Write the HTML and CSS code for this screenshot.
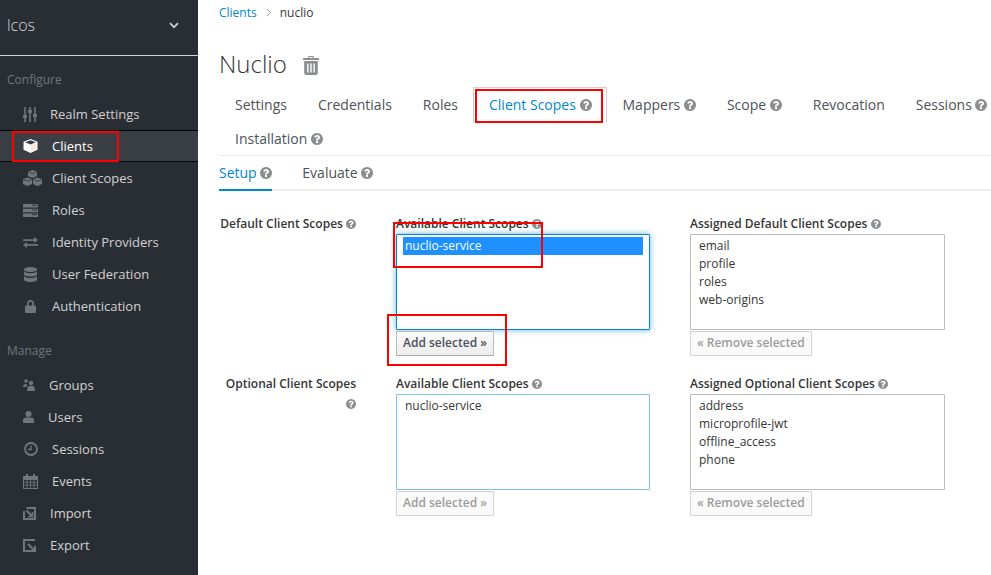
FILE: index.html
```html
<!DOCTYPE html>
<html lang="en">
<head>
<meta charset="utf-8">
<title>Nuclio</title>
<link rel="stylesheet" href="styles.css">
</head>
<body>
<svg class="defs" aria-hidden="true">
  <symbol id="q" viewBox="0 128 1536 1536"><path d="M896 1376v-192q0-14-9-23t-23-9h-192q-14 0-23 9t-9 23v192q0 14 9 23t23 9h192q14 0 23-9t9-23zm256-672q0-88-55.5-163t-138.5-116-170-41q-243 0-371 213-15 24 8 42l132 100q7 6 19 6 16 0 25-12 53-68 86-92 34-24 86-24 48 0 85.5 26t37.5 59q0 38-20 61t-68 45q-63 28-115.5 86.5t-52.5 125.5v36q0 14 9 23t23 9h192q14 0 23-9t9-23q0-19 21.5-49.5t54.5-49.5q32-18 49-28.5t46-35 44.5-48 28-60.5 12.5-81zm384 192q0 209-103 385.5t-279.5 279.5-385.5 103-385.5-103-279.5-279.5-103-385.5 103-385.5 279.5-279.5 385.5-103 385.5 103 279.5 279.5 103 385.5z"/></symbol>
</svg>
<div class="app">
  <aside class="sidebar">
    <div class="realm">
      <span>lcos</span>
      <svg class="chevron" width="10" height="7" viewBox="0 0 10 7"><path d="M1 1.2l4 4 4-4" fill="none" stroke="#d1d1d1" stroke-width="1.7"/></svg>
    </div>
    <div class="section first">Configure</div>
    <a class="item"><span class="slot s27"><svg width="14" height="15" viewBox="0 0 14 15"><path d="M2 0v15M7 0v15M12 0v15" stroke="#72767b" stroke-width="1.6" fill="none"/><path d="M0 8h4v3H0zM5 3h4v3H5zM10 7h4v3h-4z" fill="#72767b"/></svg></span>Realm Settings</a>
    <a class="item active"><span class="slot"><svg width="15" height="14" viewBox="0 0 15 14"><path d="M7.5 0L14.5 2.8v8L7.5 14 .5 10.8v-8z" fill="#fff"/><path d="M2.2 3.2l5.3 2.2 5.3-2.2-5.3-2z" fill="#393f44"/><path d="M8 6.2l5.500-2.200v6.200L8 12.600z" fill="#f6e8d8"/></svg></span>Clients</a>
    <a class="item"><span class="slot"><svg width="19" height="16" viewBox="0 0 19 16" fill="#72767b"><path d="M9.5 0l4.5 1.8v4.400L9.500 8 5 6.200V1.800z"/><path d="M4.500 7.500L9 9.300v4.600L4.500 16 0 14V9.300z"/><path d="M14.500 7.500L19 9.300V14l-4.500 2-4.500-2V9.300z"/><path d="M5.600 2.200l3.900 1.500 3.900-1.500M.6 9.600l3.900 1.600 3.900-1.600M10.600 9.600l3.900 1.600 3.900-1.600" stroke="#292e34" stroke-width=".7" fill="none"/></svg></span>Client Scopes</a>
    <a class="item"><span class="slot"><svg width="15" height="13" viewBox="0 0 15 13" fill="#72767b"><path d="M0 0h15v3.600H0zM0 4.700h15v3.600H0zM0 9.400h15V13H0z"/><path d="M9 1.200h5M9 5.900h5M9 10.600h5" stroke="#292e34" stroke-width=".9"/></svg></span>Roles</a>
    <a class="item"><span class="slot"><svg width="15" height="11" viewBox="0 0 15 11" fill="#72767b"><path d="M0 2.200h11V0l4 3-4 3V3.900H0zM15 7.100H4V5L0 8l4 3V8.800h11z"/></svg></span>Identity Providers</a>
    <a class="item"><span class="slot"><svg class="nudge1" width="13" height="15" viewBox="0 0 13 15" fill="#72767b"><path d="M0 2.500C0 1 3 0 6.500 0S13 1 13 2.500 10 5 6.500 5 0 4 0 2.500z"/><path d="M0 4.300C1 5.600 3.500 6.200 6.500 6.200S12 5.600 13 4.300v3C13 8.600 10 9.600 6.500 9.600S0 8.600 0 7.300z"/><path d="M0 9C1 10.300 3.500 10.900 6.500 10.900S12 10.300 13 9v3.500C13 14 10 15 6.500 15S0 14 0 12.500z"/></svg></span>User Federation</a>
    <a class="item"><span class="slot"><svg class="nudge2" width="11" height="13" viewBox="0 0 11 13" fill="#72767b"><path d="M1 5.500h1V3.500a3.500 3.500 0 0 1 7 0v2h1q1 0 1 1V12q0 1-1 1H1q-1 0-1-1V6.500q0-1 1-1zm2.700 0h3.600V3.500a1.800 1.800 0 0 0-3.600 0z"/></svg></span>Authentication</a>
    <div class="section">Manage</div>
    <a class="item"><span class="slot s26"><svg width="12" height="12" viewBox="0 0 12 12" fill="#72767b"><circle cx="3" cy="2" r="1.800"/><circle cx="8" cy="4" r="2.200"/><path d="M0 8q0-3 3-3 1 0 1.500.4Q3.400 6.500 3.400 8zM4.200 12V9.500q0-2.700 3.800-2.700t3.800 2.700V12z"/></svg></span>Groups</a>
    <a class="item"><span class="slot s25"><svg width="11" height="12" viewBox="0 0 11 12" fill="#72767b"><circle cx="5.500" cy="3" r="3"/><path d="M0 12V9.500Q0 6.500 3 6.500h5q3 0 3 3V12z"/></svg></span>Users</a>
    <a class="item"><span class="slot"><svg class="nudge1" width="14" height="14" viewBox="0 0 14 14"><circle cx="7" cy="7" r="6" fill="none" stroke="#72767b" stroke-width="1.800"/><path d="M7 3.500V7.500H4" fill="none" stroke="#72767b" stroke-width="1.400"/></svg></span>Sessions</a>
    <a class="item"><span class="slot"><svg width="15" height="15" viewBox="0 0 15 15" fill="#72767b"><path d="M0 2h3V0h2v2h5V0h2v2h3v13H0zM1 6v8h13V6z"/><path d="M1 8.300h13M1 11h13M4 6v8M7.500 6v8M11 6v8" stroke="#72767b" stroke-width=".8"/></svg></span>Events</a>
    <a class="item"><span class="slot s27"><svg width="13" height="13" viewBox="0 0 13 13" fill="none" stroke="#72767b"><path d="M3.500 1H12v11H1V4" stroke-width="2"/><path d="M3.500 3.500L9 9" stroke-width="2"/><path d="M5 9.500h4.500V5" stroke-width="1.600"/></svg></span>Import</a>
    <a class="item"><span class="slot s27"><svg width="13" height="13" viewBox="0 0 13 13" fill="none" stroke="#72767b"><path d="M9.500 12H1V1h11" stroke-width="2"/><path d="M5 5l6 6" stroke-width="2"/><path d="M12 7v5H7" stroke-width="2"/></svg></span>Export</a>
  </aside>
  <main class="main">
    <nav class="crumbs"><a>Clients</a><svg class="sep" width="23" height="9" viewBox="0 0 23 9"><path d="M10 1l3.500 3.500L10 8" fill="none" stroke="#9c9c9c"/></svg><span>nuclio</span></nav>
    <div class="title">
      <h1>Nuclio</h1>
      <svg width="16" height="19" viewBox="0 0 16 19" fill="#8b8d8f"><path d="M5.500 0h5L11 2h4.500q.5 0 .5.500V4H0V2.500Q0 2 .5 2H5zM6.300 1l-.2 1h3.800l-.2-1z"/><path d="M1.200 5h13.600v12q0 2-2 2H3.200q-2 0-2-2zM4.200 7.500v9h1.400v-9zm3.100 0v9h1.400v-9zm3.100 0v9h1.400v-9z" fill-rule="evenodd"/></svg>
    </div>
    <ul class="tabs">
      <li><a>Settings</a></li>
      <li><a>Credentials</a></li>
      <li><a>Roles</a></li>
      <li class="on"><a>Client Scopes <svg class="q"><use href="#q"/></svg></a></li>
      <li><a>Mappers <svg class="q"><use href="#q"/></svg></a></li>
      <li><a>Scope <svg class="q"><use href="#q"/></svg></a></li>
      <li><a>Revocation</a></li>
      <li><a>Sessions <svg class="q"><use href="#q"/></svg></a></li>
      <li><a>Installation <svg class="q"><use href="#q"/></svg></a></li>
    </ul>
    <ul class="subtabs">
      <li class="on"><a>Setup <svg class="q"><use href="#q"/></svg></a></li>
      <li><a>Evaluate <svg class="q"><use href="#q"/></svg></a></li>
    </ul>
    <form class="scopes">
      <div class="row-label">Default Client Scopes <svg class="qs"><use href="#q"/></svg></div>
      <div class="col">
        <div class="head">Available Client Scopes <svg class="qs"><use href="#q"/></svg></div>
        <div class="list focus"><div class="opt sel">nuclio-service</div></div>
        <button type="button" class="btn">Add selected »</button>
      </div>
      <div class="col">
        <div class="head">Assigned Default Client Scopes <svg class="qs"><use href="#q"/></svg></div>
        <div class="list"><div class="opt">email</div><div class="opt">profile</div><div class="opt">roles</div><div class="opt">web-origins</div></div>
        <button type="button" class="btn off">« Remove selected</button>
      </div>
      <div class="row-label wrap">Optional Client Scopes <svg class="qs"><use href="#q"/></svg></div>
      <div class="col">
        <div class="head">Available Client Scopes <svg class="qs"><use href="#q"/></svg></div>
        <div class="list light"><div class="opt">nuclio-service</div></div>
        <button type="button" class="btn off">Add selected »</button>
      </div>
      <div class="col">
        <div class="head">Assigned Optional Client Scopes <svg class="qs"><use href="#q"/></svg></div>
        <div class="list"><div class="opt">address</div><div class="opt">microprofile-jwt</div><div class="opt">offline_access</div><div class="opt">phone</div></div>
        <button type="button" class="btn off">« Remove selected</button>
      </div>
    </form>
  </main>
</div>
<div class="mark m-clients"></div>
<div class="mark m-tab"></div>
<div class="mark m-avail"></div>
<div class="mark m-add"></div>
</body>
</html>
```
FILE: styles.css
```css
* { box-sizing: border-box; }
html, body { margin: 0; height: 100%; overflow: hidden; }
body { font-family: "Open Sans", "Noto Sans", sans-serif; font-size: 12px; color: #363636; background: #fff; }
.defs { display: none; }
.app { display: flex; height: 575px; }

.sidebar { width: 198px; flex: none; background: #292e34; color: #d1d1d1; font-size: 13px; }
.realm { height: 56px; padding: 0 19px 5px 7px; display: flex; align-items: center; justify-content: space-between; font-size: 16px; font-weight: 300; color: #d1d1d1; border-bottom: 1px solid #d1d1d1; }
.section { padding: 9px 7px 0; height: 47px; line-height: 40px; color: #72767b; font-size: 12px; }
.section.first { height: 42px; padding-top: 4px; }
.item { display: flex; align-items: center; height: 32px; padding-left: 23px; color: #d1d1d1; }
.item.active { background: #393f44; color: #fff; border-top: 1px solid #030303; border-bottom: 1px solid #030303; }
.slot { width: 29px; flex: none; display: flex; align-items: center; }
.s27 { width: 27px; }
.s26 { width: 26px; }
.s25 { width: 25px; }
.nudge1 { margin-left: 1px; }
.nudge2 { margin-left: 2px; }

.main { flex: 1; min-width: 0; padding-left: 21px; }
.crumbs { height: 24px; line-height: 25px; display: flex; align-items: center; color: #363636; }
.crumbs a { color: #0088ce; }
.sep { flex: none; }
.title { height: 64px; padding-top: 16px; display: flex; align-items: center; gap: 16px; }
.title h1 { margin: 0; font-size: 24px; font-weight: 300; line-height: 32px; color: #363636; }
.title svg { margin-top: 2px; }

.tabs { list-style: none; margin: 0 -40px 0 0; padding: 0; display: flex; flex-wrap: wrap; border-bottom: 1px solid #ededed; height: 68px; font-size: 14px; color: #4d5258; }
.tabs li { height: 34px; border: 1px solid transparent; border-bottom: 0; padding: 0 14px 0 15px; line-height: 31px; white-space: nowrap; }
.tabs li.on { color: #0088ce; border-color: #d1d1d1; margin: -1px 0 0; height: 35px; line-height: 33px; }
.q { width: 12px; height: 12px; fill: #8b8d8f; vertical-align: -1px; }
.qs { width: 10px; height: 10px; fill: #8b8d8f; vertical-align: -1px; }

.subtabs { list-style: none; margin: 0 -40px 0 0; padding: 0; display: flex; gap: 30px; height: 35px; border-bottom: 2px solid #ededed; font-size: 14px; color: #4d5258; }
.subtabs li { height: 35px; line-height: 34px; white-space: nowrap; }
.subtabs li.on { color: #0088ce; border-bottom: 2px solid #0088ce; }

.scopes { display: grid; grid-template-columns: 137px 254px 255px; column-gap: 40px; margin-top: 23px; }
.row-label { font-weight: 600; line-height: 20px; text-align: right; color: #363636; }
.row-label.wrap { padding-left: 6px; }
.col { height: 160px; }
.head { font-weight: 600; height: 20px; line-height: 20px; white-space: nowrap; }
.list { height: 96px; border: 1px solid #bbb; border-radius: 1px; padding: 2px 6px; background: #fff; line-height: 18px; }
.list.focus { border-color: #0088ce; box-shadow: 0 0 6px rgba(0, 136, 206, .6); }
.list.light { border-color: #7dc3e8; }
.opt { height: 18px; padding: 0 2px; white-space: nowrap; }
.opt.sel { background: #1e90ff; color: #fff; }
.btn { display: block; margin-top: 1px; height: 25px; padding: 0 6px 2px; font: 600 12px "Open Sans", "Noto Sans", sans-serif; color: #4d5258; background: linear-gradient(#fafafa, #ededed); border: 1px solid #bbb; border-bottom-color: #aaa; border-radius: 1px; white-space: nowrap; }
.btn.off { color: #9c9c9c; background: #fafafa; border-color: #d1d1d1; }

.mark { position: absolute; border: 2px solid #f00; pointer-events: none; }
.m-clients { left: 12px; top: 131px; width: 107px; height: 31px; }
.m-tab { left: 475px; top: 89px; width: 128px; height: 34px; }
.m-avail { left: 393px; top: 222px; width: 150px; height: 46px; }
.m-add { left: 387px; top: 314px; width: 120px; height: 52px; }
```
